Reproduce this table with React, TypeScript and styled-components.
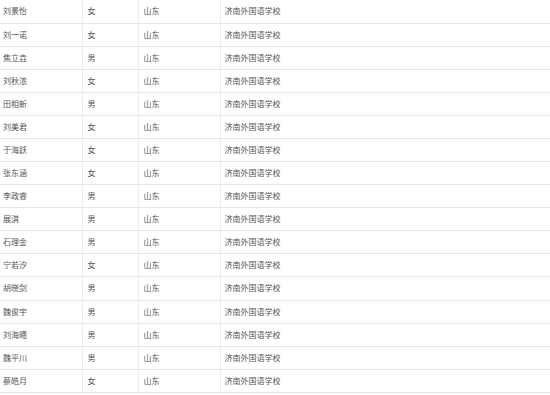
import styled, { createGlobalStyle } from "styled-components";

const GlobalStyle = createGlobalStyle`
  html, body {
    margin: 0;
    padding: 0;
    background: #ffffff;
  }
  body {
    font-family: "Noto Sans CJK SC", "Microsoft YaHei", sans-serif;
  }
`;

const students: [string, string][] = [
  ["刘景怡", "女"],
  ["刘一诺", "女"],
  ["焦立垚", "男"],
  ["刘秋浓", "女"],
  ["田相新", "男"],
  ["刘美君", "女"],
  ["于海跃", "女"],
  ["张东涵", "女"],
  ["李政睿", "男"],
  ["展淇", "男"],
  ["石理金", "男"],
  ["宁若汐", "女"],
  ["胡晓剑", "男"],
  ["魏俊宇", "男"],
  ["刘海曦", "男"],
  ["魏平川", "男"],
  ["蔡皓月", "女"],
];

const Table = styled.table`
  width: 550px;
  border-collapse: collapse;
  table-layout: fixed;
`;

const Row = styled.tr`
  height: 23.08px;
`;

const Cell = styled.td<{ $pad?: number }>`
  padding: 0 0 0 ${(p) => p.$pad ?? 5}px;
  border-bottom: 1px solid #e6e6e6;
  border-left: 1px solid #ebebeb;
  font-size: 8px;
  line-height: 22px;
  color: #555555;
  white-space: nowrap;
  overflow: hidden;

  &:first-child {
    border-left: none;
  }
`;

export default function App() {
  return (
    <>
      <GlobalStyle />
      <Table>
        <colgroup>
          <col style={{ width: 82 }} />
          <col style={{ width: 56 }} />
          <col style={{ width: 82 }} />
          <col />
        </colgroup>
        <tbody>
          {students.map(([name, sex]) => (
            <Row key={name}>
              <Cell $pad={3}>{name}</Cell>
              <Cell>{sex}</Cell>
              <Cell>山东</Cell>
              <Cell $pad={4}>济南外国语学校</Cell>
            </Row>
          ))}
        </tbody>
      </Table>
    </>
  );
}
